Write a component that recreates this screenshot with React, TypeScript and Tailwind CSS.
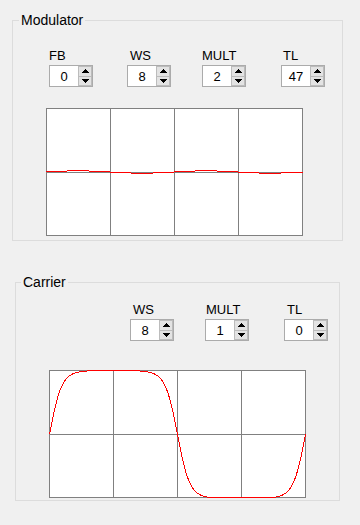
import React from 'react'

const font = { fontFamily: '"Liberation Sans", Arial, sans-serif' }

// tiny modulator trace, hand-placed per pixel row (relative to plot top)
const modSegments: [number, number, number][] = [
  [0, 21, 63],
  [21, 43, 62],
  [43, 64, 63],
  [64, 85, 64],
  [85, 107, 65],
  [107, 128, 64],
]

function carrierPoints() {
  const pts: string[] = []
  const a = 3.3
  for (let x = 0; x <= 256; x++) {
    const s = Math.sin((2 * Math.PI * x) / 256)
    const v = Math.tanh(a * s) / Math.tanh(a)
    let y = 64.5 - v * 64
    if (y < 0.5) y = 0.5
    if (y > 127.5) y = 127.5
    pts.push(`${x + 0.5},${y}`)
  }
  return pts.join(' ')
}

function Scope({ kind }: { kind: 'mod' | 'car' }) {
  return (
    <svg width={257} height={128} className="block" shapeRendering="crispEdges">
      <rect x={0.5} y={0.5} width={256} height={127} fill="#ffffff" stroke="#808080" />
      <line x1={64.5} y1={0} x2={64.5} y2={128} stroke="#808080" />
      <line x1={128.5} y1={0} x2={128.5} y2={128} stroke="#808080" />
      <line x1={192.5} y1={0} x2={192.5} y2={128} stroke="#808080" />
      <line x1={0} y1={64.5} x2={257} y2={64.5} stroke="#808080" />
      {kind === 'mod' &&
        [0, 128].map((off) =>
          modSegments.map(([x0, x1, y]) => (
            <rect key={`${off}-${x0}`} x={off + x0} y={y} width={Math.min(x1 + off, 257) - (off + x0) + (off === 128 && x1 === 128 ? 1 : 0)} height={1} fill="#ff0000" />
          ))
        )}
      {kind === 'car' && (
        <polyline points={carrierPoints()} fill="none" stroke="#ff0000" strokeWidth={1} />
      )}
    </svg>
  )
}

function Arrow({ up }: { up?: boolean }) {
  return (
    <svg width={7} height={4} className="block" shapeRendering="crispEdges">
      {up ? <polygon points="3.5,0 7,4 0,4" fill="#000" /> : <polygon points="0,0 7,0 3.5,4" fill="#000" />}
    </svg>
  )
}

function Spin({ label, value, indent = 0 }: { label: string; value: string; indent?: number }) {
  return (
    <div className="flex flex-col">
      <div className="text-[13px] leading-[15px] text-black h-[15px]" style={{ paddingLeft: indent }}>
        {label}
      </div>
      <div className="mt-[2px] flex w-[44px] h-[22px] border border-[#ababab] bg-white">
        <div className="flex-1 flex items-center justify-center text-[13px] leading-[15px] text-black">{value}</div>
        <div className="w-[14px] flex flex-col bg-[#bcbcbc] p-px gap-px">
          <div className="flex-1 bg-[#e3e3e3] flex items-center justify-center">
            <Arrow up />
          </div>
          <div className="flex-1 bg-[#e3e3e3] flex items-center justify-center">
            <Arrow />
          </div>
        </div>
      </div>
    </div>
  )
}

export default function App() {
  return (
    <div className="w-[360px] h-[525px] bg-[#f0f0f0] overflow-hidden" style={font}>
      {/* Modulator group */}
      <fieldset className="ml-[12px] mt-[13px] w-[331px] border border-[#dcdcdc] pb-[4px]">
        <legend className="ml-[6px] px-[2px] text-[14px] leading-[15px] text-black">Modulator</legend>
        <div className="flex pt-[20px]">
          <div className="ml-[36px]">
            <Spin label="FB" value="0" />
          </div>
          <div className="ml-[34px]">
            <Spin label="WS" value="8" indent={3} />
          </div>
          <div className="ml-[31px]">
            <Spin label="MULT" value="2" />
          </div>
          <div className="ml-[35px]">
            <Spin label="TL" value="47" indent={2} />
          </div>
        </div>
        <div className="ml-[33px] mt-[21px]">
          <Scope kind="mod" />
        </div>
      </fieldset>

      {/* Carrier group */}
      <fieldset className="ml-[15px] mt-[34px] w-[325px] border border-[#dcdcdc] pb-[2px]">
        <legend className="ml-[5px] px-[2px] text-[14px] leading-[15px] text-black">Carrier</legend>
        <div className="flex pt-[12px]">
          <div className="ml-[114px]">
            <Spin label="WS" value="8" indent={3} />
          </div>
          <div className="ml-[31px]">
            <Spin label="MULT" value="1" indent={1} />
          </div>
          <div className="ml-[35px]">
            <Spin label="TL" value="0" indent={3} />
          </div>
        </div>
        <div className="ml-[33px] mt-[29px]">
          <Scope kind="car" />
        </div>
      </fieldset>
    </div>
  )
}
